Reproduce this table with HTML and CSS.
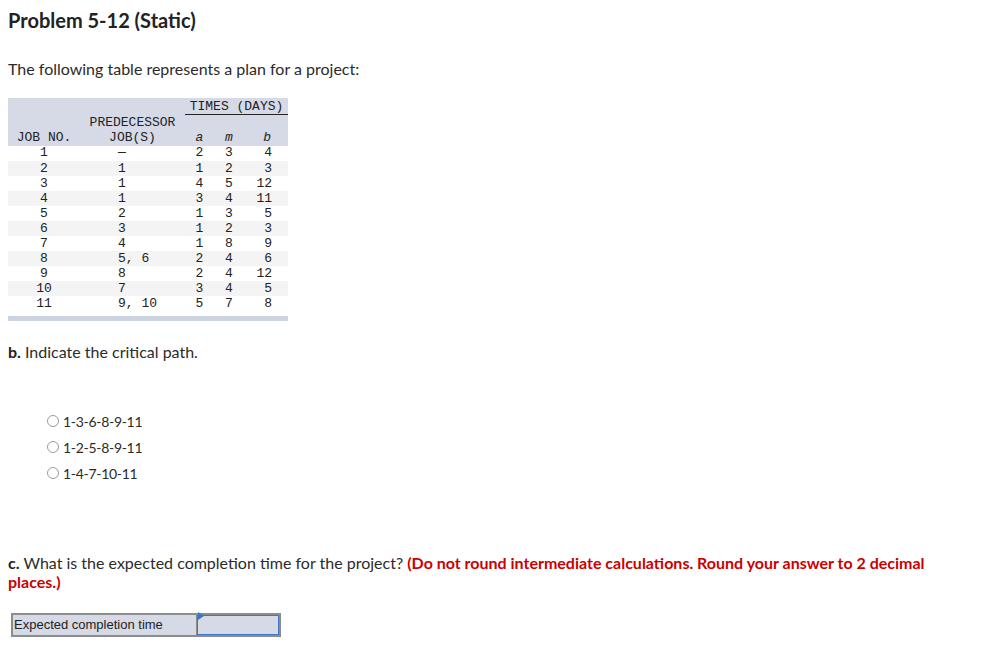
FILE: index.html
```html
<!DOCTYPE html>
<html>
<head>
<meta charset="utf-8">
<link rel="stylesheet" href="styles.css">
</head>
<body>
<h1 class="title">Problem 5-12 (Static)</h1>
<p class="intro">The following table represents a plan for a project:</p>

<div class="plan">
  <table class="jobs">
    <colgroup>
      <col class="c-job"><col class="c-pred"><col class="c-a"><col class="c-m"><col class="c-b">
    </colgroup>
    <thead>
      <tr class="h1">
        <th></th><th></th>
        <th colspan="3" class="times"><span>TIMES (DAYS)</span></th>
      </tr>
      <tr class="h2">
        <th></th><th class="center">PREDECESSOR</th><th></th><th></th><th></th>
      </tr>
      <tr class="h3">
        <th class="center">JOB NO.</th><th class="center">JOB(S)</th>
        <th class="center"><i>a</i></th><th class="center"><i>m</i></th><th class="right"><i>b</i></th>
      </tr>
    </thead>
    <tbody>
      <tr class="first"><td>1</td><td class="pred">&mdash;</td><td>2</td><td>3</td><td class="b">4</td></tr>
      <tr class="alt"><td>2</td><td class="pred">1</td><td>1</td><td>2</td><td class="b">3</td></tr>
      <tr><td>3</td><td class="pred">1</td><td>4</td><td>5</td><td class="b">12</td></tr>
      <tr class="alt"><td>4</td><td class="pred">1</td><td>3</td><td>4</td><td class="b">11</td></tr>
      <tr><td>5</td><td class="pred">2</td><td>1</td><td>3</td><td class="b">5</td></tr>
      <tr class="alt"><td>6</td><td class="pred">3</td><td>1</td><td>2</td><td class="b">3</td></tr>
      <tr><td>7</td><td class="pred">4</td><td>1</td><td>8</td><td class="b">9</td></tr>
      <tr class="alt"><td>8</td><td class="pred">5, 6</td><td>2</td><td>4</td><td class="b">6</td></tr>
      <tr><td>9</td><td class="pred">8</td><td>2</td><td>4</td><td class="b">12</td></tr>
      <tr class="alt"><td>10</td><td class="pred">7</td><td>3</td><td>4</td><td class="b">5</td></tr>
      <tr><td>11</td><td class="pred">9, 10</td><td>5</td><td>7</td><td class="b">8</td></tr>
    </tbody>
  </table>
  <div class="plan-bar"></div>
</div>

<p class="question q-b"><b>b.</b> Indicate the critical path.</p>

<div class="choices">
  <label class="choice"><span class="radio"></span>1-3-6-8-9-11</label>
  <label class="choice"><span class="radio"></span>1-2-5-8-9-11</label>
  <label class="choice"><span class="radio"></span>1-4-7-10-11</label>
</div>

<p class="question q-c"><b>c.</b> What is the expected completion time for the project? <strong class="warn">(Do not round intermediate calculations. Round your answer to 2 decimal</strong> <strong class="warn">places.)</strong></p>

<div class="answer">
  <div class="answer-label">Expected completion time</div>
  <div class="answer-input"><span class="flag"></span></div>
</div>
</body>
</html>
```

FILE: styles.css
```css
html, body {
  margin: 0;
  padding: 0;
  background: #fff;
}
body {
  padding: 8px;
  font-family: Lato, "Open Sans", sans-serif;
  color: #2b2b2b;
}
.title {
  margin: 0;
  font-size: 20px;
  line-height: 24px;
  font-weight: 700;
  color: #222;
}
.intro {
  margin: 27px 0 0;
  font-size: 16px;
  line-height: 20px;
}
.plan {
  margin-top: 19px;
  width: 280px;
}
.jobs {
  width: 280px;
  border-collapse: collapse;
  table-layout: fixed;
  font-family: "Liberation Mono", "Courier New", monospace;
  font-size: 13px;
  color: #222;
}
.c-job { width: 72px; }
.c-pred { width: 105px; }
.c-a { width: 29px; }
.c-m { width: 30px; }
.c-b { width: 44px; }
.jobs thead tr {
  background: #d6dae6;
}
.jobs th {
  font-weight: normal;
  padding: 0;
  white-space: nowrap;
  line-height: 14px;
}
.jobs .h1 { height: 16px; }
.jobs .h2 { height: 16px; }
.jobs .h3 { height: 16px; }
.jobs .h1 th { vertical-align: bottom; }
.jobs .h2 th { vertical-align: bottom; }
.jobs .h3 th { vertical-align: bottom; padding-bottom: 1px; }
.jobs .times {
  text-align: center;
  border-bottom: 1px solid #222;
}
.jobs .center { text-align: center; }
.jobs .right { text-align: right; padding-right: 17px; }
.jobs td {
  padding: 0;
  height: 15px;
  line-height: 15px;
  text-align: center;
}
.jobs .first td {
  height: 14px;
  padding-top: 1px;
  line-height: 12px;
  vertical-align: top;
}
.jobs .alt { background: #f4f4f4; }
.jobs td.pred {
  text-align: left;
  padding-left: 38px;
}
.jobs td.b {
  text-align: right;
  padding-right: 16px;
}
.plan-bar {
  margin-top: 5px;
  height: 5px;
  background: #ccd3e1;
}
.question {
  margin: 0;
  font-size: 16px;
  line-height: 20px;
}
.q-b { margin-top: 21px; }
.question b { font-weight: 700; color: #222; }
.choices {
  margin: 46px 0 0 39px;
  display: flex;
  flex-direction: column;
}
.choice {
  display: flex;
  align-items: center;
  gap: 4px;
  height: 26px;
  font-size: 14px;
  letter-spacing: -0.3px;
}
.radio {
  width: 12px;
  height: 12px;
  border: 1px solid #9a9a9a;
  border-radius: 50%;
  background: #fff;
  box-sizing: border-box;
}
.q-c {
  margin-top: 67px;
  line-height: 19px;
  max-width: 940px;
}
.warn {
  color: #c00;
  font-weight: 700;
}
.answer {
  margin: 22px 0 0 3px;
  display: flex;
  width: 270px;
  height: 24px;
}
.answer-label {
  width: 186px;
  box-sizing: border-box;
  border: 2px solid #8c8c8c;
  border-right-width: 1px;
  background: #d6dae6;
  font-family: "Liberation Sans", Arial, sans-serif;
  font-size: 13px;
  line-height: 20px;
  padding-left: 1px;
  color: #222;
}
.answer-input {
  position: relative;
  flex: 1;
  box-sizing: border-box;
  border: 2px solid #8c8c8c;
  border-left-width: 0;
  background: #d6dae6;
}
.answer-input::before {
  content: "";
  position: absolute;
  inset: 0;
  border: 1px solid #3b76c9;
}
.flag {
  position: absolute;
  left: 1px;
  top: 1px;
  width: 0;
  height: 0;
  border-top: 4px solid transparent;
  border-bottom: 4px solid transparent;
  border-left: 6px solid #3b76c9;
  transform: translateY(-4px);
}
```
